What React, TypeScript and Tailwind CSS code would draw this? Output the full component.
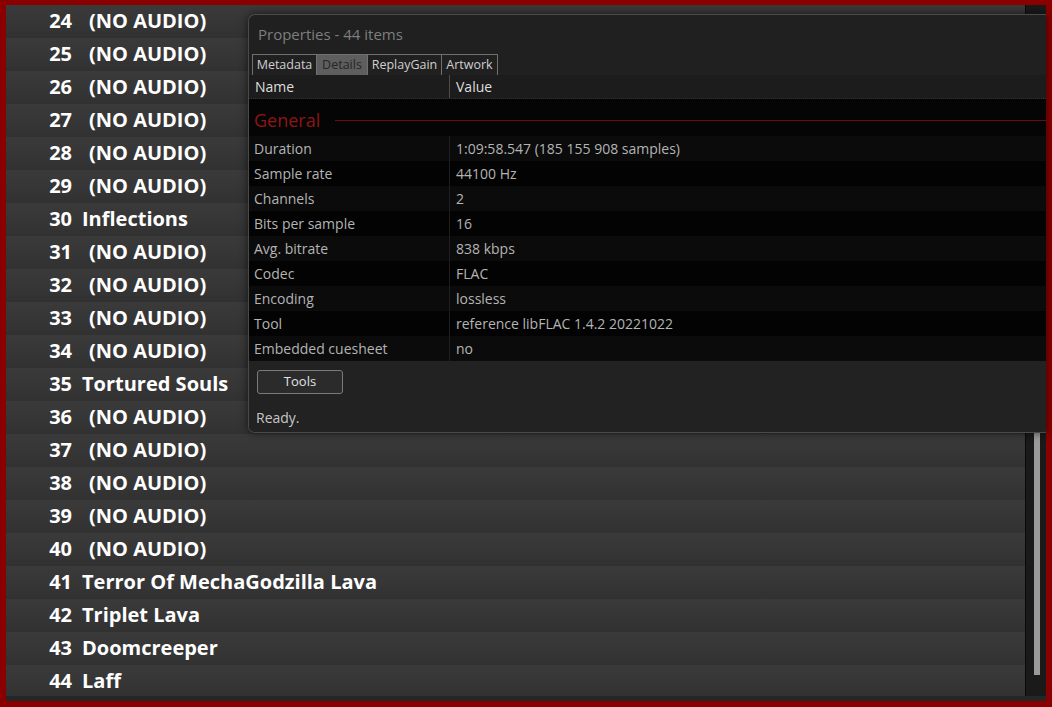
import React from "react";

const tracks: [number, string][] = [
  [24, ""],
  [25, ""],
  [26, ""],
  [27, ""],
  [28, ""],
  [29, ""],
  [30, "Inflections"],
  [31, ""],
  [32, ""],
  [33, ""],
  [34, ""],
  [35, "Tortured Souls"],
  [36, ""],
  [37, ""],
  [38, ""],
  [39, ""],
  [40, ""],
  [41, "Terror Of MechaGodzilla Lava"],
  [42, "Triplet Lava"],
  [43, "Doomcreeper"],
  [44, "Laff"],
];

const details: [string, string][] = [
  ["Duration", "1:09:58.547 (185 155 908 samples)"],
  ["Sample rate", "44100 Hz"],
  ["Channels", "2"],
  ["Bits per sample", "16"],
  ["Avg. bitrate", "838 kbps"],
  ["Codec", "FLAC"],
  ["Encoding", "lossless"],
  ["Tool", "reference libFLAC 1.4.2 20221022"],
  ["Embedded cuesheet", "no"],
];

const tabs = [
  { label: "Metadata", w: "w-[64px]" },
  { label: "Details", w: "w-[51px]" },
  { label: "ReplayGain", w: "w-[74px]" },
  { label: "Artwork", w: "w-[57px]" },
];

const PropertiesWindow: React.FC = () => (
  <div className="absolute left-[242px] top-[9px] right-0 h-[419px] bg-[#202020] border border-[#4a4a4a] border-r-0 rounded-tl-[7px] rounded-bl-[7px] shadow-[0_0_8px_rgba(0,0,0,0.6)] flex flex-col overflow-hidden">
    <div className="h-[39px] flex items-center pl-[9px] text-[15px] text-[#7e7e7e]">
      Properties - 44 items
    </div>
    <div className="flex pl-[3px] h-[21px]">
      {tabs.map((t, i) => (
        <div
          key={t.label}
          className={`${t.w} border-t border-l border-[#707070] ${
            i === tabs.length - 1 ? "border-r" : ""
          } ${
            t.label === "Details"
              ? "bg-[#5e5e5e] text-[#262626]"
              : "text-[#cfcfcf]"
          } flex items-center justify-center text-[12.5px]`}
        >
          {t.label}
        </div>
      ))}
    </div>
    <div className="h-[24px] flex bg-[#1c1c1c] border-b border-dotted border-[#333] text-[14px] text-[#dedede]">
      <div className="w-[201px] pl-[6px] flex items-center border-r border-[#4c4c4c]">
        Name
      </div>
      <div className="pl-[6px] flex items-center">Value</div>
    </div>
    <div className="bg-[#050505] flex flex-col">
      <div className="h-[37px] flex items-center pl-[5px] pt-[6px]">
        <span className="text-[18px] text-[#8e1616]">General</span>
        <div className="flex-1 h-px bg-[#6e0c0c] ml-[15px]" />
      </div>
      {details.map(([k, v], i) => (
        <div
          key={k}
          className={`h-[25px] flex text-[14px] text-[#b4b4b4] ${
            i % 2 === 0 ? "bg-[#0b0b0b]" : "bg-[#030303]"
          }`}
        >
          <div className="w-[201px] pl-[5px] flex items-center border-r border-[#1e1e1e]">
            {k}
          </div>
          <div className="pl-[6px] flex items-center">{v}</div>
        </div>
      ))}
    </div>
    <div className="flex-1 bg-[#222222] flex flex-col pl-[8px]">
      <button className="mt-[9px] w-[86px] h-[24px] border border-[#7a7a7a] rounded-[3px] bg-[#2b2b2b] text-[13px] text-[#e2e2e2] flex items-center justify-center">
        Tools
      </button>
      <div className="mt-[13px] text-[14px] text-[#c6c6c6] -ml-px">Ready.</div>
    </div>
  </div>
);

export default function App() {
  return (
    <div
      className="w-[1052px] h-[707px] bg-[#8a0000] pt-[5px] pl-[6px] pr-[6px] pb-[6px] overflow-hidden"
      style={{ fontFamily: '"Open Sans", "Noto Sans", sans-serif' }}
    >
      <div className="relative w-full h-full flex flex-col bg-[#262626]">
        <div className="flex flex-1 overflow-hidden">
          <div className="flex-1 flex flex-col overflow-hidden">
            {tracks.map(([n, title]) => (
              <div
                key={n}
                className="h-[33px] shrink-0 flex items-center pb-[2px] bg-gradient-to-b from-[#3a3a3a] via-[#363636] to-[#313131] text-white font-bold text-[20px]"
              >
                <span className="w-[66px] text-right">{n}</span>
                <span className={title ? "pl-[10px]" : "pl-[17px]"}>
                  {title || "(NO AUDIO)"}
                </span>
              </div>
            ))}
          </div>
          <div className="w-[21px] bg-[#1a1a1a] border-l border-[#0a0a0a] flex justify-center pt-[200px]">
            <div className="w-[6px] h-[470px] bg-[#9a9a9a] ml-[2px]" />
          </div>
        </div>
        <div className="h-[5px] shrink-0 bg-[#262626]" />
        <PropertiesWindow />
      </div>
    </div>
  );
}
